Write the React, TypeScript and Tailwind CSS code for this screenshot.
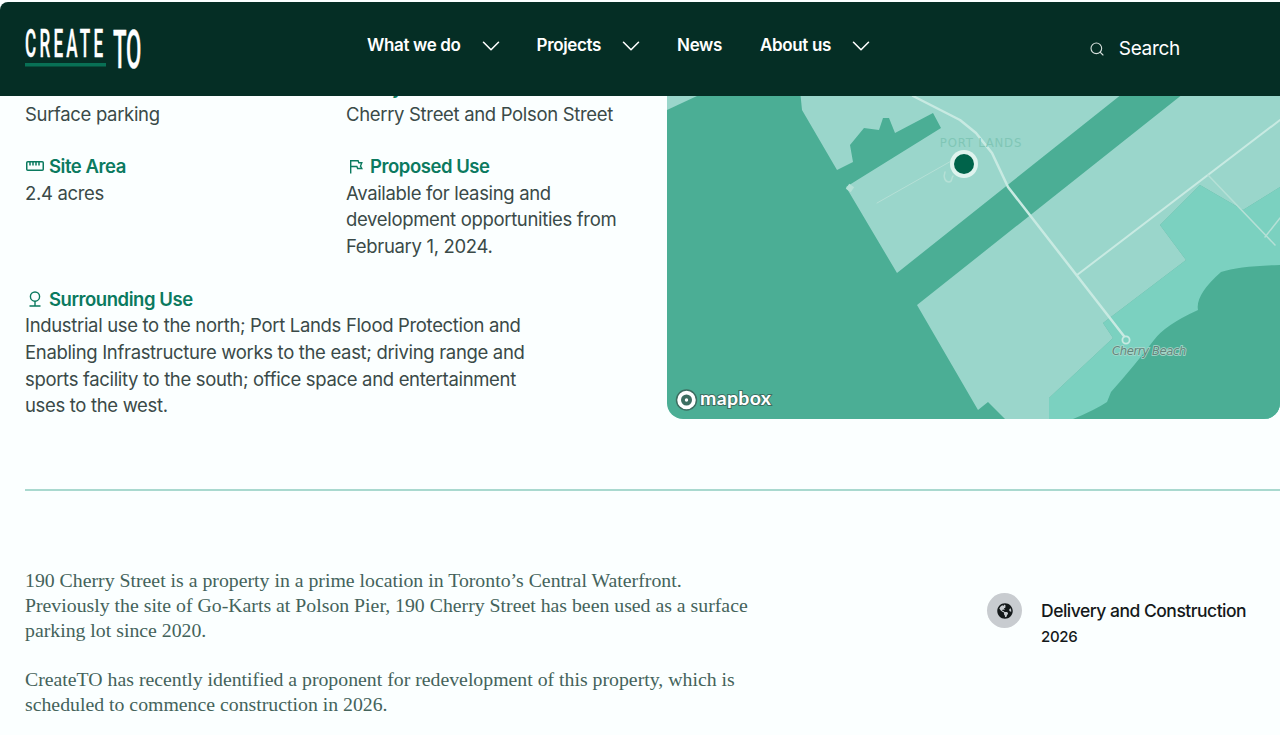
import { ChevronDown, Search } from 'lucide-react'
import { FaGlobeAmericas } from 'react-icons/fa'

// Site details page: fixed dark header over a scrolled property summary and map.
const NAV = [
  { label: 'What we do', chevron: true },
  { label: 'Projects', chevron: true },
  { label: 'News', chevron: false },
  { label: 'About us', chevron: true },
]

function Logo() {
  return (
    <svg width="120" height="44" viewBox="0 0 120 44" className="block overflow-visible">
      <text
        transform="translate(0 30) scale(0.45 1)"
        fill="#fff"
        stroke="#fff"
        strokeWidth="0.4"
        fontFamily="Roboto, sans-serif"
        fontSize="38"
        fontWeight="500"
        letterSpacing="7.2"
      >
        CREATE
      </text>
      <rect x="0" y="36" width="81" height="3.5" fill="#087055" />
      <text
        transform="translate(88 41) scale(0.42 1)"
        fill="#fff"
        stroke="#fff"
        strokeWidth="0.4"
        fontFamily="Roboto, sans-serif"
        fontSize="53"
        fontWeight="500"
      >
        TO
      </text>
    </svg>
  )
}

function RulerIcon() {
  return (
    <svg width="18" height="10" viewBox="0 0 18 10" fill="none" stroke="#0b7a5f" strokeWidth="1.5">
      <rect x="0.75" y="0.75" width="16.5" height="8.5" rx="1" />
      <path d="M4 1v3.5M7 1v3.5M10 1v3.5M13 1v3.5" />
    </svg>
  )
}

function FlagIcon() {
  return (
    <svg width="14" height="15" viewBox="0 0 14 15" fill="none" stroke="#0b7a5f" strokeWidth="1.4">
      <path d="M1.7 14.5V1.7h7.4l.7 2h3l-1.3 3.4 1.3 2.4H8.6l-.7-2H1.7" />
    </svg>
  )
}

function PinIcon() {
  return (
    <svg width="14" height="16" viewBox="0 0 14 16" fill="none" stroke="#0b7a5f" strokeWidth="1.4">
      <circle cx="7" cy="5.6" r="4.6" />
      <path d="M7 10.2v4.8M1.5 15h11" />
    </svg>
  )
}

function Label({ icon, text }: { icon?: React.ReactNode; text: string }) {
  return (
    <div className="flex h-[27px] items-center gap-[5px] text-[18.5px] font-semibold tracking-[-0.45px] text-[#0b7a5f]">
      <span className="flex w-[19px] flex-none justify-center">{icon}</span>
      {text}
    </div>
  )
}

function MapPanel() {
  return (
    <div className="h-[417px] flex-1 overflow-hidden rounded-b-[16px] bg-[#4bae95]">
      <svg width="613" height="417" viewBox="667 2 613 417" className="block">
        <polygon fill="#7bd1c0" points="1049,419 1049,398 1113,338 1103,323 1186,260 1160,225 1200,185 1243,210 1280,187 1280,419" />
        <path fill="#4bae95" d="M1073 419Q1095 410 1107 402L1111 392Q1135 365 1154 340Q1165 325 1198 310Q1195 295 1221 272Q1240 266 1280 265V419Z" />
        <polygon fill="#9ad6cb" points="667,96 697,96 667,110" />
        <polygon fill="#9ad6cb" points="800,90 1127,90 897,273 846,187 941,128 933,113 895,133 889,118 883,118 879,130 864,128 850,145 853,162 837,170 802,110" />
        <polygon fill="#9ad6cb" points="1188,90 1280,90 1280,187 1243,210 1200,185 1160,225 1186,260 1103,323 1113,338 1049,398 1049,419 1005,419 988,402 978,410 917,305" />
        <rect x="847" y="185" width="6" height="6" fill="#b5e0d6" transform="rotate(35 850 188)" />
        <g fill="none" stroke="#c8eae2" strokeLinecap="round" strokeLinejoin="round">
          <path strokeWidth="2.5" d="M913 96 960 120 976 133 992 153 1008 187 1127 340" />
          <path strokeWidth="2" d="M1077 275 1280 120" />
          <path strokeWidth="1.5" stroke="#b5e0d6" d="M1208 175 1275 245M1265 237 1280 218" />
          <path strokeWidth="1" stroke="#b5e0d6" d="M877 203 953 160" />
          <path strokeWidth="1.5" stroke="#b5e0d6" d="M945 172c-2 5 0 10 4 10s2-4 4-6" />
          <circle cx="1126" cy="340" r="3.6" strokeWidth="1.8" fill="#7bd1c0" />
        </g>
        <text x="981" y="147" textAnchor="middle" fill="#80c6b6" fontFamily="'DejaVu Sans Condensed', 'DejaVu Sans', sans-serif" fontSize="13" letterSpacing="0.8">
          PORT LANDS
        </text>
        <circle cx="964" cy="164" r="14" fill="#dff3ee" />
        <circle cx="964" cy="164" r="10" fill="#00634a" />
        <text x="1149" y="355" textAnchor="middle" fill="#64857b" stroke="#a9d9cd" strokeWidth="1.5" paintOrder="stroke" fontFamily="'DejaVu Sans Condensed', 'DejaVu Sans', sans-serif" fontSize="12.8" fontStyle="italic">
          Cherry Beach
        </text>
        <circle cx="686.5" cy="400" r="10" fill="#fff" stroke="#3d6e61" strokeWidth="1.5" />
        <circle cx="686.5" cy="400" r="5.5" fill="#3d6e61" />
        <circle cx="686.5" cy="400" r="1.7" fill="#fff" />
        <text x="700" y="405" fill="#fff" stroke="#3d6e61" strokeWidth="2" paintOrder="stroke" fontFamily="Lato, sans-serif" fontSize="19.5" fontWeight="700" letterSpacing="0.35">
          mapbox
        </text>
      </svg>
    </div>
  )
}

export default function App() {
  return (
    <div className="h-[735px] overflow-hidden bg-[#fbffff] pt-[2px] font-['Inter',sans-serif] text-[18.5px] leading-[26.6px] tracking-[-0.33px] text-[#3a4a48]">
      <header className="fixed inset-x-0 top-[2px] z-10 flex h-[94px] items-center rounded-tl-lg bg-[#052e25] pl-[25px] pr-[100px] text-white">
        <Logo />
        <nav className="ml-[222px] flex items-center pb-[7px] text-[17px] font-semibold tracking-[-0.35px]">
          {NAV.map((item) => (
            <div key={item.label} className="mr-[38px] flex items-center gap-[22px]">
              {item.label}
              {item.chevron && <ChevronDown size={30} strokeWidth={1.25} className="-mx-[7px]" />}
            </div>
          ))}
        </nav>
        <div className="ml-auto flex items-center gap-[14px] text-[19px] tracking-[-0.3px]">
          <Search size={16} strokeWidth={1.7} className="text-[#d5dedb]" />
          Search
        </div>
      </header>

      <div className="flex">
        <div className="w-[667px] flex-none pl-[25px] pt-[72px]">
          <div className="flex">
            <div className="w-[321px]">
              <Label text="Current Use" />
              <p>Surface parking</p>
            </div>
            <div>
              <Label text="Key Intersection" />
              <p>Cherry Street and Polson Street</p>
            </div>
          </div>
          <div className="mt-[25px] flex">
            <div className="w-[321px]">
              <Label icon={<RulerIcon />} text="Site Area" />
              <p>2.4 acres</p>
            </div>
            <div>
              <Label icon={<FlagIcon />} text="Proposed Use" />
              <p className="w-[285px]">Available for leasing and development opportunities from February 1, 2024.</p>
            </div>
          </div>
          <div className="mt-[26px] w-[510px]">
            <Label icon={<PinIcon />} text="Surrounding Use" />
            <p>
              Industrial use to the north; Port Lands Flood Protection and Enabling Infrastructure works to the east;
              driving range and sports facility to the south; office space and entertainment uses to the west.
            </p>
          </div>
        </div>
        <MapPanel />
      </div>

      <div className="ml-[25px] mt-[70px] border-t-2 border-[#a9d9cf]" />

      <div className="mt-[77px] flex pl-[25px]">
        <div className="w-[962px] flex-none font-['Liberation_Serif',serif] text-[19.8px] leading-[25px] tracking-normal text-[#44635b]">
          <p className="w-[735px]">
            190 Cherry Street is a property in a prime location in Toronto’s Central Waterfront. Previously the site of
            Go-Karts at Polson Pier, 190 Cherry Street has been used as a surface parking lot since 2020.
          </p>
          <p className="mt-[24px] w-[735px]">
            CreateTO has recently identified a proponent for redevelopment of this property, which is scheduled to
            commence construction in 2026.
          </p>
        </div>
        <div className="flex gap-[19px] pt-[25px] text-[#14191a]">
          <div className="flex h-[35px] w-[35px] items-center justify-center rounded-full bg-[#c8ccd0]">
            <FaGlobeAmericas size={16} />
          </div>
          <div className="pt-[5px] font-medium">
            <div className="text-[17.5px] leading-[25px] tracking-[-0.5px]">Delivery and Construction</div>
            <div className="mt-[1px] text-[15px] leading-[25px] tracking-[-0.3px]">2026</div>
          </div>
        </div>
      </div>
    </div>
  )
}
